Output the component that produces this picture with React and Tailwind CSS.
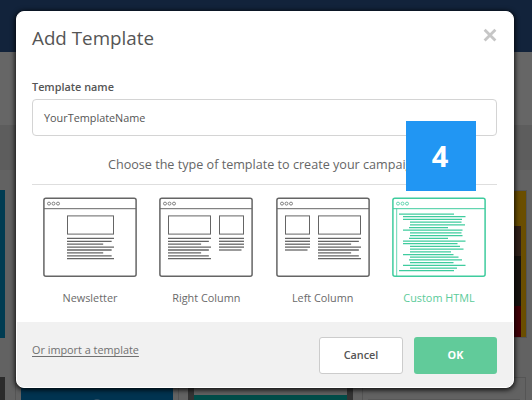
import React from "react";

const DARK = "#656565";
const GREEN = "#3fcc9e";

function Frame({ color, children }) {
  return (
    <svg width="94" height="80" viewBox="0 0 94 80" fill="none" stroke={color} strokeWidth="1">
      <rect x="0.9" y="1.2" width="92.2" height="78" rx="2" strokeWidth="1.5" />
      <path d="M1 11.7H93" />
      <g strokeWidth="0.8">
        <circle cx="6" cy="6.6" r="1.5" />
        <circle cx="10.5" cy="6.6" r="1.5" />
        <circle cx="15" cy="6.6" r="1.5" />
      </g>
      {children}
    </svg>
  );
}

const WIDTHS = [1, 0.95, 0.77, 1, 0.95, 0.77, 0.95, 1];
const NARROW = [1, 1, 1, 1, 0.9];

function Block({ x, width, lines }) {
  return (
    <g>
      <rect x={x + 0.5} y="18.9" width={width - 1} height="18.2" />
      {lines.map((w, i) => (
        <path key={i} d={`M${x} ${41.4 + i * 2.9}h${width * w}`} strokeWidth="1.3" />
      ))}
    </g>
  );
}

const CODE = [
  [7, 62], [11, 73.5], [11, 70], [18, 69.5], [18, 73], [17, 56], [11, 70.5], [18, 69.5],
  [18, 70.5], [17, 56], [11, 73.5], [11, 65.5], [18, 68], [18, 71.5], [18, 59], [11, 61.5],
  [18, 66.5], [17, 70], [18, 61.5], [11, 73.5], [18, 65], [7, 62],
];

function Option({ label, selected, children }) {
  return (
    <button className={"flex w-[94px] flex-col items-center " + (selected ? "text-[#5bcb9a]" : "text-[#6a6a6a]")}>
      <Frame color={selected ? GREEN : DARK}>{children}</Frame>
      <span className="mt-[13px] text-[10.85px] leading-4 whitespace-nowrap">{label}</span>
    </button>
  );
}

function Backdrop() {
  return (
    <div className="flex h-full flex-col bg-[#626262]">
      <div className="h-[52px] shrink-0 bg-[#12233b]" />
      <div className="h-[73px] shrink-0 bg-[#666]" />
      <div className="h-[45px] shrink-0 bg-[#5d5d5d]" />
      <div className="mt-5 flex h-[148px] shrink-0 justify-between">
        <div className="w-[5px] bg-[#003c52]" />
        <div className="mr-[5px] flex w-[170px] justify-end border border-[#555] bg-[#6a4e00] pt-[35px] pr-[5px]">
          <div className="flex w-[30px] flex-col">
            <div className="h-[30px] bg-[#302019]" />
            <div className="h-[50px] bg-[#171310]" />
            <div className="grow bg-[#430008]" />
          </div>
        </div>
      </div>
      <div className="mt-[39px] flex grow">
        <div className="w-[5px] bg-[#2b2b2b]" />
        <div className="ml-[10px] w-[164px] border border-b-0 border-[#555] px-[5px] pt-[5px]">
          <div className="flex h-full justify-center bg-[#003350] pt-[16px]">
            <div className="size-[8px] rounded-full bg-[#315066]" />
          </div>
        </div>
        <div className="ml-[9px] w-[165px] border-x-[6px] border-[#333] bg-[#626262] pt-[18px]">
          <div className="h-full bg-[#004c48]" />
        </div>
        <div className="ml-[9px] w-[164px] border border-b-0 border-[#555] px-[5px] pt-[21px]">
          <div className="h-full bg-[#585858]" />
        </div>
      </div>
    </div>
  );
}

export default function App() {
  return (
    <div className="relative h-[400px] w-[532px] overflow-hidden font-['Open_Sans','Noto_Sans',sans-serif] text-[#555]">
      <Backdrop />
      <section className="absolute top-[11px] left-4 flex h-[377px] w-[498px] flex-col rounded-[8px] border border-white bg-white shadow-[0_1px_5px_1px_rgba(0,0,0,0.85)]">
        <header className="flex h-[67px] shrink-0 items-start justify-between pr-4 pl-[15px]">
          <h1 className="mt-[12px] text-[18.8px] leading-7">Add Template</h1>
          <svg className="mt-[16px]" width="14" height="14" viewBox="0 0 14 14" stroke="#c6c6c6" strokeWidth="2.8">
            <path d="M1.6 1.8L12.4 12.6M12.4 1.8L1.6 12.6" />
          </svg>
        </header>
        <div className="flex grow flex-col pr-4 pl-[15px]">
          <label className="text-[10.85px] leading-4 font-semibold">Template name</label>
          <div className="mt-[4px] flex h-[37px] items-center rounded-[4px] border border-[#d4d4d4] px-[11px] pt-[2px] text-[10.85px]">
            YourTemplateName
          </div>
          <p className="mt-[19px] border-b border-[#dedede] pb-[9px] pl-[76px] text-[12.6px] leading-5 whitespace-nowrap text-[#666]">
            Choose the type of template to create your campaign
          </p>
          <div className="mt-[12px] flex justify-between px-[11px]">
            <Option label="Newsletter">
              <Block x={24} width={47} lines={WIDTHS} />
            </Option>
            <Option label="Right Column">
              <Block x={9} width={43} lines={WIDTHS} />
              <Block x={60} width={25} lines={NARROW} />
            </Option>
            <Option label="Left Column">
              <Block x={9} width={25} lines={NARROW} />
              <Block x={42} width={43} lines={WIDTHS} />
            </Option>
            <Option label="Custom HTML" selected>
              <path d="M4.7 11.5V79" strokeWidth="0.8" />
              {CODE.map(([a, b], i) => (
                <path key={i} d={`M${a} ${17 + i * 2.7}H${b}`} strokeWidth="1.25" />
              ))}
            </Option>
          </div>
        </div>
        <footer className="flex h-[65px] shrink-0 items-center rounded-b-[7px] bg-[#f1f1f1] pt-[2px] pr-4 pl-[15px]">
          <a className="mt-[-10px] text-[10.85px] text-[#707070] underline underline-offset-2">Or import a template</a>
          <button className="ml-auto h-[37px] w-[84px] rounded-[3px] border border-[#ccc] bg-white text-[10.85px] font-semibold">
            Cancel
          </button>
          <button className="ml-[11px] h-[37px] w-[83px] rounded-[3px] bg-[#61cb9a] text-[10.85px] font-bold text-white">
            OK
          </button>
        </footer>
      </section>
      <div className="absolute top-[121px] left-[406px] flex h-[70px] w-[70px] items-center justify-center bg-[#2196f3] pr-[2px] text-[29px] font-bold text-white">
        4
      </div>
    </div>
  );
}
